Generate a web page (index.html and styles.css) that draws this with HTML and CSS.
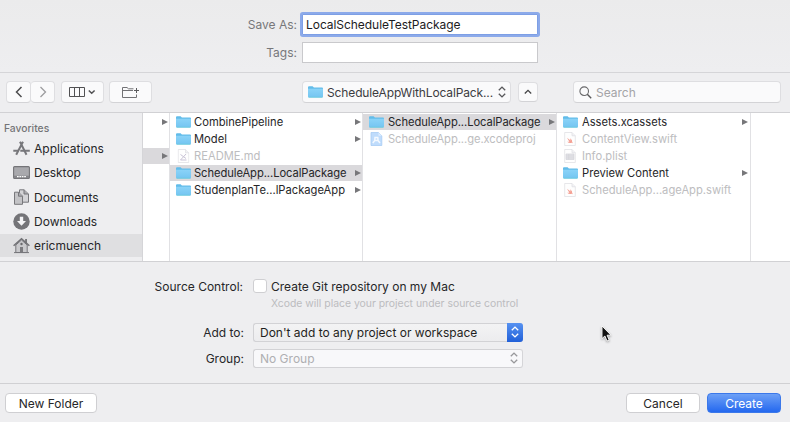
FILE: index.html
```html
<!DOCTYPE html>
<html lang="en">
<head>
<meta charset="utf-8">
<title>Save</title>
<link rel="stylesheet" href="styles.css">
</head>
<body>
<svg class="defs" width="0" height="0">
  <defs>
    <linearGradient id="fg" x1="0" y1="0" x2="0" y2="1"><stop offset="0" stop-color="#8ad3f8"/><stop offset="1" stop-color="#74c5f1"/></linearGradient>
    <symbol id="folder" viewBox="0 0 15 12">
      <path d="M0 1.3Q0 .3 1 .3H4.6L5.9 1.5H14Q15 1.5 15 2.5V3H0Z" fill="#62bce9"/>
      <path d="M0 2.8H15V10.6Q15 11.4 14.2 11.4H.8Q0 11.4 0 10.6Z" fill="url(#fg)"/>
      <path d="M.5 11.3H14.5" stroke="#69cbd9" stroke-width=".7"/>
    </symbol>
    <symbol id="page" viewBox="0 0 12 14">
      <path d="M.7 .5H8L11.3 3.8V13.5H.7Z" fill="#fefefe" stroke="#e1e1e4" stroke-width=".8"/>
      <path d="M8 .5V3.8H11.3" fill="#f2f2f4" stroke="#dedee2" stroke-width=".7"/>
    </symbol>
    <symbol id="swift" viewBox="0 0 12 14">
      <use href="#page" width="12" height="14"/>
      <path d="M3 5.8L6.6 8.4 6 6.2Q8.6 8 8.2 10L8.9 11.2 7.6 10.8Q5 11.5 3.2 9.7L5.4 9.7Z" fill="#f4a093"/>
    </symbol>
    <symbol id="updown" viewBox="0 0 8 12"><path d="M.8 4.2L4 1.1 7.2 4.2M.8 7.8L4 10.9 7.2 7.8" fill="none" stroke="currentColor" stroke-width="1.4"/></symbol>
  </defs>
</svg>

<section class="name-form">
  <label class="form-row"><span class="form-label">Save As:</span><span class="field focused">LocalScheduleTestPackage</span></label>
  <label class="form-row tags"><span class="form-label">Tags:</span><span class="field"></span></label>
</section>

<nav class="toolbar">
  <div class="segmented">
    <span class="tool nav"><svg width="8" height="12" viewBox="0 0 8 12"><path d="M6.5 1L1.5 6 6.5 11" fill="none" stroke="#4c4c4e" stroke-width="1.5"/></svg></span>
    <span class="tool nav"><svg width="8" height="12" viewBox="0 0 8 12"><path d="M1.5 1L6.5 6 1.5 11" fill="none" stroke="#9c9c9f" stroke-width="1.3"/></svg></span>
  </div>
  <span class="tool view"><svg width="27" height="12" viewBox="0 0 27 12"><path d="M.5 1.5H15.5V10.5H.5ZM5.5 1.5V10.5M10.5 1.5V10.5" fill="none" stroke="#515153"/><path d="M19.8 4.5L22.7 7.3 25.6 4.5" fill="none" stroke="#515153" stroke-width="1.5"/></svg></span>
  <span class="tool group"><svg width="18" height="13" viewBox="0 0 18 13"><path d="M14.5 8.5V11.5H.5V1.5H5L6.5 2.8H11.5M.5 4.5H11" fill="none" stroke="#727275"/><path d="M14.5 2V7M12 4.5H17" stroke="#5b5b5d"/></svg></span>
  <span class="tool path"><svg width="15" height="12"><use href="#folder"/></svg><span class="path-text">ScheduleAppWithLocalPack...</span><svg class="dark" width="8" height="12"><use href="#updown"/></svg></span>
  <span class="tool collapse"><svg width="8" height="6" viewBox="0 0 8 6"><path d="M.8 4.5L4 1.3 7.2 4.5" fill="none" stroke="#454547" stroke-width="1.3"/></svg></span>
  <span class="tool search"><svg width="13" height="13" viewBox="0 0 13 13"><circle cx="5.2" cy="5.2" r="4.3" fill="none" stroke="#69696b" stroke-width="1.1"/><path d="M8.3 8.3L12.2 12.2" stroke="#58585a" stroke-width="1.4"/></svg><span>Search</span></span>
</nav>

<main class="browser">
  <aside class="sidebar">
    <h2>Favorites</h2>
    <div class="place"><svg width="17" height="17" viewBox="0 0 17 17"><g fill="none" stroke="#77777b"><path d="M7 1.8L13.5 14.7M10 1.8L3.2 14.7" stroke-width="2"/><path d="M.3 10.8H5.2M7.3 10.8H16.8" stroke-width="2"/></g></svg><span>Applications</span></div>
    <div class="place desk"><svg width="17" height="17" viewBox="0 0 17 17"><rect x=".6" y="2.6" width="15.8" height="11.8" rx="1" fill="#a9a9ad" stroke="#747478" stroke-width="1.1"/><path d="M1 12.8H16" stroke="#858589" stroke-width="2.2"/><path d="M4 12.6H13" stroke="#fff" stroke-width="1.3" stroke-dasharray="1.7 .7"/></svg><span>Desktop</span></div>
    <div class="place docs"><svg width="17" height="17" viewBox="0 0 17 17"><g stroke="#77777b" stroke-width="1"><path d="M6.5 .8H11L15.5 5V13.2H6.5Z" fill="#d3d3d6"/><path d="M11 .8V5H15.5" fill="#aaaaae"/><path d="M1.5 3.2H5.5L9.5 7.2V15.3H1.5Z" fill="#c3c3c6"/><path d="M5.5 3.2V7.2H9.5" fill="#aaaaae"/></g></svg><span>Documents</span></div>
    <div class="place down"><svg width="17" height="17" viewBox="0 0 17 17"><circle cx="8.5" cy="8.5" r="8.2" fill="#747478"/><path d="M6.8 3.7H10.2V8H13L8.5 12.8 4 8H6.8Z" fill="#f3f3f5"/></svg><span>Downloads</span></div>
    <div class="place home selected"><svg width="17" height="17" viewBox="0 0 17 17"><path d="M2.8 8L8.5 3 14.2 8V15.5H2.8Z" fill="#c9c9cc" stroke="#77777b"/><path d="M12.1 5V2H14V6.5" fill="#77777b"/><path d="M.6 8.7L8.5 1.8 16.4 8.7" fill="none" stroke="#717175" stroke-width="1.5"/><circle cx="8.5" cy="7" r="1.2" fill="#69696d"/><path d="M7 10H10V15.5H7Z" fill="#7b7b7f"/><path d="M1 15.6H16" stroke="#77777b"/></svg><span>ericmuench</span></div>
  </aside>

  <div class="column first">
    <div class="row"><i class="arrow"></i></div>
    <div class="row"></div>
    <div class="row selected"><i class="arrow"></i></div>
  </div>

  <div class="column second">
    <div class="row"><svg class="icon" width="15" height="12"><use href="#folder"/></svg><span>CombinePipeline</span><i class="arrow"></i></div>
    <div class="row"><svg class="icon" width="15" height="12"><use href="#folder"/></svg><span>Model</span><i class="arrow"></i></div>
    <div class="row disabled"><svg class="icon" width="15" height="14" viewBox="0 0 15 14"><use href="#page" x="1.5" width="12" height="14"/><path d="M4.5 5.5L10 9.5M10 5L4.5 11H10.5" fill="none" stroke="#c9c3d6"/></svg><span>README.md</span></div>
    <div class="row selected"><svg class="icon" width="15" height="12"><use href="#folder"/></svg><span class="tight">ScheduleApp...LocalPackage</span><i class="arrow"></i></div>
    <div class="row"><svg class="icon" width="15" height="12"><use href="#folder"/></svg><span>StudenplanTe...lPackageApp</span><i class="arrow"></i></div>
  </div>

  <div class="column third">
    <div class="row selected"><svg class="icon" width="15" height="12"><use href="#folder"/></svg><span class="tight">ScheduleApp...LocalPackage</span><i class="arrow"></i></div>
    <div class="row disabled"><svg class="icon" width="15" height="14" viewBox="0 0 15 14"><path d="M2 .5H9.5L12.8 3.8V13.5H2Z" fill="#bfdcfc" stroke="#a7cbf4" stroke-width=".8"/><path d="M9.5 .5V3.8H12.8" fill="#deedff"/><path d="M3.8 11L5.8 8.6H9L11 11M5.8 8L6 5.5H8.8L9 8" fill="none" stroke="#f4f9ff" stroke-width="1.5"/></svg><span class="tight">ScheduleApp...ge.xcodeproj</span></div>
  </div>

  <div class="column fourth">
    <div class="row"><svg class="icon" width="15" height="12"><use href="#folder"/></svg><span>Assets.xcassets</span><i class="arrow"></i></div>
    <div class="row disabled"><svg class="icon" width="15" height="14"><use href="#swift" x="1" width="12" height="14"/></svg><span>ContentView.swift</span></div>
    <div class="row disabled"><svg class="icon" width="15" height="14" viewBox="0 0 15 14"><use href="#page" x="1" width="12" height="14"/><path d="M3 5H11V10.5H3ZM3 7H11M3 9H11M5.7 5V10.5" fill="#e4e4e8" stroke="#d2d2d8" stroke-width=".7"/></svg><span>Info.plist</span></div>
    <div class="row"><svg class="icon" width="15" height="12"><use href="#folder"/></svg><span>Preview Content</span><i class="arrow"></i></div>
    <div class="row disabled"><svg class="icon" width="15" height="14"><use href="#swift" x="1" width="12" height="14"/></svg><span>ScheduleApp...ageApp.swift</span></div>
  </div>
  <div class="column last"></div>
</main>

<section class="options">
  <div class="option git"><span class="option-label source">Source Control:</span><span class="checkbox"></span><span class="git-text">Create Git repository on my Mac</span></div>
  <p class="hint">Xcode will place your project under source control</p>
  <div class="option add"><span class="option-label">Add to:</span><span class="popup"><span>Don't add to any project or workspace</span><span class="stepper"><svg width="8" height="12"><use href="#updown"/></svg></span></span></div>
  <div class="option grp"><span class="option-label">Group:</span><span class="popup off"><span>No Group</span><span class="stepper"><svg width="8" height="12"><use href="#updown"/></svg></span></span></div>
</section>

<footer class="footer">
  <button class="btn new">New Folder</button>
  <button class="btn cancel">Cancel</button>
  <button class="btn primary">Create</button>
</footer>

<svg class="cursor" width="11" height="18" viewBox="0 0 11 18"><path d="M1 1V13.6L3.9 11 6 16 8.2 15.1 6.1 10.2H10Z" fill="#111" stroke="#fff" stroke-width=".9"/></svg>
</body>
</html>
```

FILE: styles.css
```css
* { box-sizing: border-box; }
body {
  margin: 0;
  width: 790px;
  height: 422px;
  overflow: hidden;
  background: #eeeef0;
  color: #262628;
  font-family: Inter, "Liberation Sans", sans-serif;
  font-size: 12px;
  white-space: nowrap;
}
svg { display: block; flex: none; }
.defs { position: absolute; }

.name-form {
  height: 73px;
  padding-top: 14px;
  border-bottom: 1px solid #d5d5d8;
  background: linear-gradient(#ebebec, #eeeef0);
}
.form-row { display: flex; align-items: center; height: 21px; }
.form-row.tags { margin-top: 7px; }
.form-label {
  width: 297px;
  margin-right: 5px;
  text-align: right;
  color: #77777a;
}
.field {
  width: 236px;
  height: 21px;
  padding-left: 3px;
  line-height: 19px;
  letter-spacing: -.05px;
  color: #1c1c1e;
  background: #fff;
  border: 1px solid #c9c9cc;
}
.field.focused { border-color: #7d9fe5; box-shadow: 0 0 0 2px #8caaea; border-radius: 1px; }

.toolbar { display: flex; height: 39px; padding: 8px 0 0 6px; align-items: flex-start; }
.tool {
  display: flex;
  align-items: center;
  justify-content: center;
  height: 22px;
  border: 1px solid #dedee1;
  border-bottom-color: #d3d3d6;
  border-radius: 4px;
  background: #fafafb;
}
.segmented { display: flex; }
.nav { width: 25px; }
.nav + .nav { border-left: 0; width: 24px; }
.view { width: 43px; margin-left: 6px; }
.group { width: 43px; margin-left: 5px; }
.path { width: 209px; margin-left: 150px; padding: 0 4px 0 5px; justify-content: flex-start; }
.path-text { flex: 1; margin-left: 4px; letter-spacing: -.13px; color: #3c3c3f; }
.dark { color: #59595c; }
.collapse { width: 20px; height: 20px; margin: 1px 0 0 7px; }
.search { width: 208px; margin-left: 35px; padding-left: 5px; justify-content: flex-start; gap: 4px; color: #a4a4a7; }

.browser {
  display: grid;
  grid-template-columns: 143px 27px 193px 194px 194px 1fr;
  height: 150px;
  border-top: 1px solid #d1d1d4;
  border-bottom: 1px solid #d1d1d4;
}
.sidebar { border-right: 1px solid #d5d5d8; padding-top: 8px; background: #eeeef0; }
.sidebar h2 { margin: 0; padding-left: 4px; font-size: 10.3px; line-height: 14px; font-weight: 500; color: #747477; }
.place { display: flex; align-items: center; height: 24.5px; padding-left: 13px; gap: 4px; }
.place:nth-child(2) { margin-top: 1px; }
.place.selected { background: #dfdfe1; height: 23px; }
.column { background: #fff; border-right: 1px solid #e1e1e4; padding-top: 1px; }
.column.last { border-right: 0; }
.row {
  display: flex;
  align-items: center;
  height: 16px;
  margin-bottom: 1px;
  padding: 0 1px 0 6px;
  font-size: 11.2px;
}
.row.selected { background: #dad9dc; }
.row.disabled { color: #bdbdc0; }
.icon { margin-right: 4px; }
.second .icon { margin-right: 3px; }
.tight { letter-spacing: -.07px; }
.arrow {
  margin-left: auto;
  border-left: 6px solid #77777a;
  border-top: 3.5px solid transparent;
  border-bottom: 3.5px solid transparent;
}
.fourth .row { padding-right: 2px; }

.options { height: 121px; padding-top: 14px; }
.option { display: flex; align-items: center; height: 20px; }
.option-label { width: 244px; margin-right: 9px; text-align: right; }
.option-label.source { width: 243px; margin-right: 10px; }
.checkbox { width: 14px; height: 14px; border: 1px solid #cfcfd2; border-radius: 3px; background: #fff; margin-right: 4px; }
.hint { margin: 1px 0 0 271px; height: 14px; line-height: 14px; font-size: 10.4px; color: #bcbcbf; }
.add { margin-top: 11px; }
.grp { margin-top: 6px; }
.popup {
  display: flex;
  align-items: center;
  justify-content: space-between;
  width: 270px;
  height: 19px;
  padding-left: 6px;
  border: 1px solid #d2d2d5;
  border-right: 0;
  border-radius: 3px;
  background: linear-gradient(#f3f3f4, #ececee);
  color: #1f1f21;
}
.popup.off { background: #f8f8fa; color: #afafb2; border-right: 1px solid #d5d5d8; }
.stepper { display: flex; align-items: center; justify-content: center; width: 16px; height: 19px; border-radius: 0 3px 3px 0; background: linear-gradient(#5792f1, #2160d8); color: #fff; }
.off .stepper { background: none; color: #98989b; }

.footer { display: flex; height: 39px; padding: 9px 9px 0 5px; border-top: 1px solid #d0d0d3; }
.btn {
  height: 20px;
  padding: 0;
  border: 1px solid #cfcfd2;
  border-radius: 4px;
  background: #fff;
  color: #262628;
  font: inherit;
}
.new { width: 92px; margin-right: auto; }
.cancel { width: 74px; margin-right: 7px; }
.primary { width: 74px; border-color: #3b78ea; background: linear-gradient(#6da0f6, #2468ef); color: #fff; }

.cursor { position: absolute; left: 601px; top: 325px; filter: drop-shadow(0 1px 1px #0005); }
```
